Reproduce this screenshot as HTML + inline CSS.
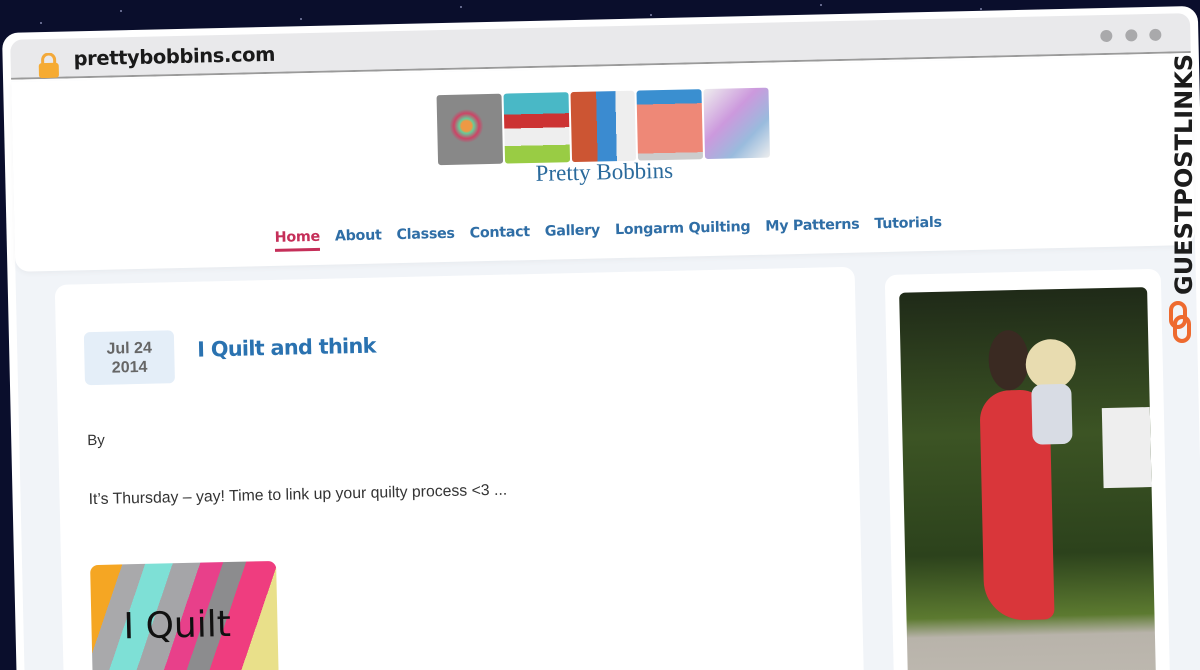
<!DOCTYPE html>
<html><head><meta charset="utf-8"><style>
*{margin:0;padding:0;box-sizing:border-box}
html{width:1200px;height:670px;overflow:hidden}
body{width:1200px;height:670px;overflow:hidden;background:#0a0e2c;position:relative;font-family:"Liberation Sans",sans-serif}
.star{position:absolute;width:2px;height:2px;background:#cfd3ff;border-radius:50%;opacity:.6}
#frame{position:absolute;left:2px;top:33px;width:1196px;height:680px;background:#fff;border-radius:16px 16px 0 0;transform-origin:0 0;transform:rotate(-1.3deg);overflow:hidden}
#bar{position:absolute;left:8px;top:7px;right:8px;height:40px;background:#e9e9eb;border-bottom:2px solid #9a9a9a;border-radius:12px 12px 0 0}
.lock{position:absolute;left:27px;top:14px;width:22px;height:25px}
.url{position:absolute;left:63px;top:9px;font-size:19.5px;font-weight:bold;color:#1a1a1a;font-family:"DejaVu Sans","Liberation Sans",sans-serif;letter-spacing:-.4px}
.dot{position:absolute;top:15px;width:12px;height:12px;border-radius:50%;background:#a9a9ab}
#content{position:absolute;left:8px;top:49px;right:8px;bottom:0;background:#f1f4f8}
#header{position:absolute;left:0;top:0;right:0;height:190px;background:#fff;border-radius:0 0 14px 14px;box-shadow:0 2px 6px rgba(0,0,0,.04)}
.logo{position:absolute;left:425px;top:23px;width:332px;height:96px}
.pics{display:flex;gap:2px;height:70px}
.pics div{flex:1;border-radius:3px}
.logotxt{text-align:center;font-family:"Liberation Serif",serif;font-size:23px;color:#2a6a9c;margin-top:-2px}
.nav{position:absolute;left:260px;top:154px;display:flex;gap:15px;font-weight:bold;color:#2f6ea6;font-family:"DejaVu Sans","Liberation Sans",sans-serif;letter-spacing:-.3px}
.nav span{font-size:14.3px}
.nav .home{color:#c52f59;border-bottom:3px solid #c52f59;padding-bottom:3px}
#main{position:absolute;left:39px;top:204px;width:800px;height:500px;background:#fff;border-radius:12px}
.date{position:absolute;left:28px;top:48px;width:90px;height:53px;background:#e4eef8;border-radius:6px;text-align:center;color:#666;font-size:16px;font-weight:bold;line-height:19px;padding-top:8px}
.title{position:absolute;left:141px;top:56px;font-size:20.8px;font-weight:bold;color:#2a72b0;font-family:"DejaVu Sans","Liberation Sans",sans-serif;letter-spacing:-.7px}
.by{position:absolute;left:29px;top:148px;font-size:15px;color:#333}
.ex{position:absolute;left:29px;top:207px;font-size:15.8px;color:#333}
.qimg{position:absolute;left:29px;top:281px;width:186px;height:120px;border-radius:8px;overflow:hidden;background:linear-gradient(110deg,#f5a623 0 14%,#a9a9ab 14% 24%,#7ee0d6 24% 36%,#a5a5a8 36% 48%,#e8408a 48% 58%,#8c8c8e 58% 68%,#ef3d7f 68% 82%,#e9e08a 82%)}
.qimg b{position:absolute;left:32px;top:42px;font-size:36px;color:#111;font-family:"DejaVu Sans",sans-serif;font-weight:normal}
#side{position:absolute;left:869px;top:213px;width:276px;height:500px;background:#fff;border-radius:12px}
.photo{position:absolute;left:14px;top:18px;width:248px;height:480px;border-radius:6px;overflow:hidden;background:linear-gradient(180deg,#1f2a18 0%,#3c5424 30%,#2c421c 55%,#5c7a30 68%,#b8b3aa 72%,#c9c3bb 100%)}
.gpl{position:absolute;left:1160px;top:55px;width:40px;height:300px}
</style></head><body>
<div class="star" style="left:120px;top:10px"></div><div class="star" style="left:300px;top:18px"></div><div class="star" style="left:460px;top:6px"></div><div class="star" style="left:650px;top:14px"></div><div class="star" style="left:820px;top:4px"></div><div class="star" style="left:40px;top:22px"></div><div class="star" style="left:560px;top:22px"></div><div class="star" style="left:980px;top:8px"></div>
<div id="frame">
 <div id="bar">
  <svg class="lock" viewBox="0 0 22 25"><path d="M5 11V7a6 6 0 0 1 12 0v4" fill="none" stroke="#f3a93a" stroke-width="3"/><rect x="1" y="10" width="20" height="15" rx="3" fill="#f6ab32"/></svg>
  <div class="url">prettybobbins.com</div>
  <div class="dot" style="left:1090px"></div><div class="dot" style="left:1115px"></div><div class="dot" style="left:1139px"></div>
 </div>
 <div id="content">
  <div id="header">
   <div class="logo">
    <div class="pics"><div style="background:radial-gradient(circle at 45% 45%,#e94 0 10%,#6c9 14%,#c46 24%,#888 32%)"></div><div style="background:linear-gradient(#49b8c6 0 30%,#c33 30% 50%,#eee 50% 75%,#9c4 75%)"></div><div style="background:linear-gradient(90deg,#c53 0 40%,#3b8bd0 40% 70%,#eee 70%)"></div><div style="background:linear-gradient(#3a8fd0 0 20%,#e87 20% 90%,#ccc 90%)"></div><div style="background:linear-gradient(135deg,#eee,#c9d 40%,#9bd 70%,#eee)"></div></div>
    <div class="logotxt">Pretty Bobbins</div>
   </div>
   <div class="nav"><span class="home">Home</span><span>About</span><span>Classes</span><span>Contact</span><span>Gallery</span><span>Longarm Quilting</span><span>My Patterns</span><span>Tutorials</span></div>
  </div>
  <div id="main">
   <div class="date">Jul 24<br>2014</div>
   <div class="title">I Quilt and think</div>
   <div class="by">By</div>
   <div class="ex">It’s Thursday – yay! Time to link up your quilty process &lt;3 ...</div>
   <div class="qimg"><b>I Quilt</b></div>
  </div>
  <div id="side"><div class="photo">
   <div style="position:absolute;left:78px;top:100px;width:70px;height:230px;background:#d9363a;border-radius:30px 30px 10px 40px"></div>
   <div style="position:absolute;left:88px;top:40px;width:40px;height:60px;background:#3a2a22;border-radius:50%"></div>
   <div style="position:absolute;left:125px;top:50px;width:50px;height:50px;background:#e8dcb0;border-radius:50%"></div>
   <div style="position:absolute;left:130px;top:95px;width:40px;height:60px;background:#d8dce4;border-radius:10px"></div>
   <div style="position:absolute;left:200px;top:120px;width:48px;height:80px;background:#eee"></div>
  </div></div>
 </div>
</div>
<svg class="gpl" viewBox="0 0 40 300"><text transform="translate(32,240) rotate(-90)" font-family="DejaVu Sans,sans-serif" font-weight="bold" font-size="24" fill="#1c1c1c">GUESTPOSTLINKS</text><g fill="none" stroke="#ee6a2f" stroke-width="4"><rect x="11" y="248" width="14" height="24" rx="7"/><rect x="15" y="262" width="14" height="24" rx="7"/></g></svg>
</body></html>
